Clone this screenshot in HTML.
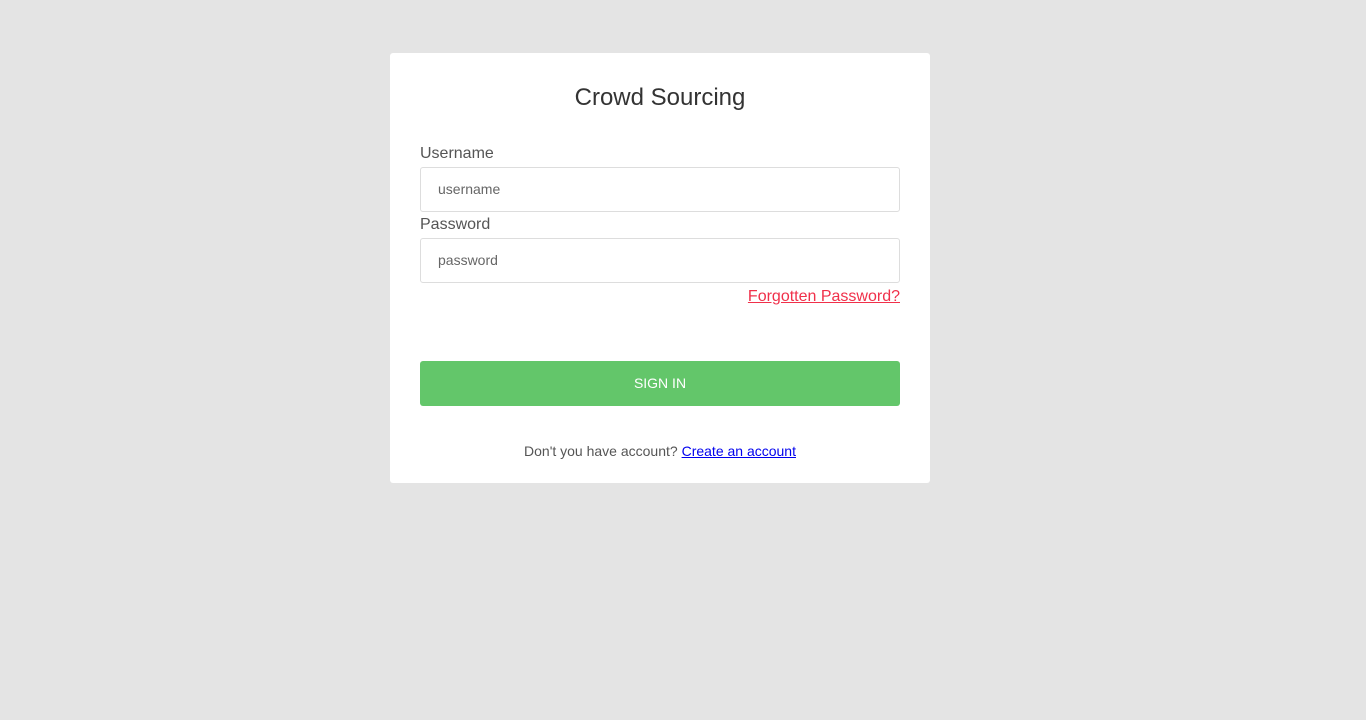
<!DOCTYPE html>
<html><head><style>
body{margin:0;background:#e4e4e4;font-family:"Liberation Sans",sans-serif;width:1366px;height:720px;position:relative}
.card{position:absolute;left:390px;top:53px;width:540px;height:430px;background:#fff;border-radius:3px}
h1{position:absolute;left:0;width:540px;top:31px;margin:0;text-align:center;font-weight:normal;font-size:24px;color:#333}
.lbl{position:absolute;left:30px;font-size:16px;color:#555}
.inp{position:absolute;left:30px;width:478px;height:43px;border:1px solid #ddd;border-radius:3px;font-size:14px;color:#666;line-height:43px;box-sizing:content-box}
.inp span{padding-left:17px}
.fp{position:absolute;right:30px;top:235px;font-size:16px;color:#f0304a;text-decoration:underline}
.btn{position:absolute;left:30px;top:308px;width:480px;height:45px;background:#63c66a;border-radius:3px;color:#fff;font-size:14px;text-align:center;line-height:45px}
.ft{position:absolute;left:0;width:540px;top:390px;text-align:center;font-size:14px;color:#555}
.ft a{color:#00e;text-decoration:underline}
</style></head><body>
<div class="card">
<h1>Crowd Sourcing</h1>
<div class="lbl" style="top:92px">Username</div>
<div class="inp" style="top:114px"><span>username</span></div>
<div class="lbl" style="top:163px">Password</div>
<div class="inp" style="top:185px"><span>password</span></div>
<div class="fp">Forgotten Password?</div>
<div class="btn">SIGN IN</div>
<div class="ft">Don't you have account? <a>Create an account</a></div>
</div>
</body></html>
